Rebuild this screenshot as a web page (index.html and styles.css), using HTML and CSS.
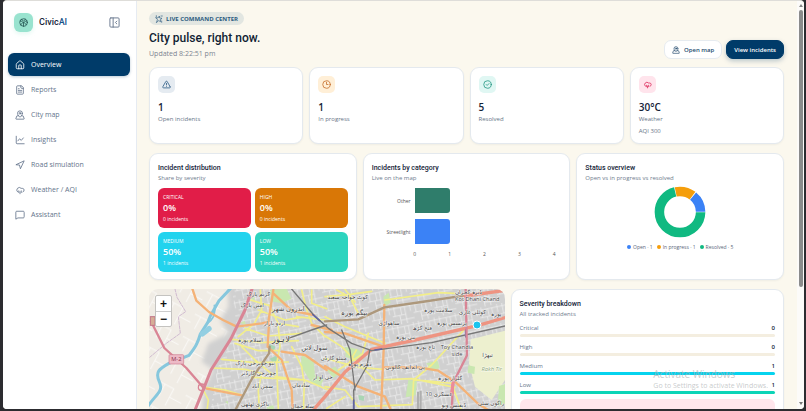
FILE: index.html
```html
<!DOCTYPE html>
<html lang="en">
<head>
<meta charset="utf-8">
<meta name="viewport" content="width=device-width, initial-scale=1">
<title>CivicAI</title>
<link rel="stylesheet" href="styles.css">
</head>
<body>
<svg class="defs" width="0" height="0" aria-hidden="true">
  <symbol id="pin" viewBox="0 0 24 24"><path d="M18 8c0 3.6-3.9 7.4-5.4 8.7a1 1 0 0 1-1.2 0C9.900 15.400 6 11.600 6 8a6 6 0 0 1 12 0"/><circle cx="12" cy="8" r="2"/><path d="M8.700 14H5a1 1 0 0 0-.9.700l-2 6a1 1 0 0 0 .9 1.300h18a1 1 0 0 0 .9-1.300l-2-6a1 1 0 0 0-.9-.700h-3.700"/></symbol>
  <symbol id="cloud" viewBox="0 0 24 24"><path d="M6 16.500A6 6 0 1 1 14.700 8h2.800a4.500 4.500 0 0 1 1.500 8.700M9 14v4M15 14v4M12 16v5"/></symbol>
</svg>
<div class="window">
  <aside class="sidebar">
    <div class="brand">
      <span class="logo"><svg class="icon" viewBox="0 0 24 24"><circle cx="12" cy="12" r="10"/><path d="M3 8c4 0 6 1 9 5 3-4 5-5 9-5M12 13v9M7 4l5 4 5-4M5 18l4-5M19 18l-4-5"/></svg></span>
      <span class="brand-name">Civic<b>AI</b></span>
      <button class="collapse" aria-label="Collapse sidebar"><svg class="icon" viewBox="0 0 24 24"><rect x="2" y="2" width="20" height="20" rx="2"/><path d="M9 2v20M17 9l-3 3 3 3"/></svg></button>
    </div>
    <nav class="nav">
      <a class="nav-item active" href="#"><svg class="icon" viewBox="0 0 24 24"><path d="M15 21v-8a1 1 0 0 0-1-1h-4a1 1 0 0 0-1 1v8"/><path d="M3 10a2 2 0 0 1 .7-1.500l7-6a2 2 0 0 1 2.600 0l7 6A2 2 0 0 1 21 10v9a2 2 0 0 1-2 2H5a2 2 0 0 1-2-2z"/></svg>Overview</a>
      <a class="nav-item" href="#"><svg class="icon" viewBox="0 0 24 24"><path d="M15 2H6a2 2 0 0 0-2 2v16a2 2 0 0 0 2 2h12a2 2 0 0 0 2-2V7zM14 2v4a2 2 0 0 0 2 2h4M10 9H8M16 13H8M16 17H8"/></svg>Reports</a>
      <a class="nav-item" href="#"><svg class="icon"><use href="#pin"/></svg>City map</a>
      <a class="nav-item" href="#"><svg class="icon" viewBox="0 0 24 24"><path d="M3 3v16a2 2 0 0 0 2 2h17M7 14l4-5 4 4 5-6"/></svg>Insights</a>
      <a class="nav-item" href="#"><svg class="icon" viewBox="0 0 24 24"><path d="M3 11 22 2l-9 19-2-8z"/></svg>Road simulation</a>
      <a class="nav-item" href="#"><svg class="icon"><use href="#cloud"/></svg>Weather / AQI</a>
      <a class="nav-item" href="#"><svg class="icon" viewBox="0 0 24 24"><path d="M22 17a2 2 0 0 1-2 2H7l-5 3V5a2 2 0 0 1 2-2h16a2 2 0 0 1 2 2z"/></svg>Assistant</a>
    </nav>
  </aside>

  <main class="main">
    <header class="header">
      <div>
        <span class="badge"><svg class="icon" viewBox="0 0 24 24"><path d="M3 8l6 1 4-6 1 6 7 1-5 4 1 6-6-3-7 6 3-8z"/><path d="M4 2v3M20 18v4M18 3h4"/></svg>LIVE COMMAND CENTER</span>
        <h1>City pulse, right now.</h1>
        <p class="updated">Updated 8:22:51 pm</p>
      </div>
      <div class="actions">
        <button class="btn"><svg class="icon"><use href="#pin"/></svg>Open map</button>
        <button class="btn primary">View incidents</button>
      </div>
    </header>

    <section class="stats">
      <article class="card stat"><span class="tile blue"><svg class="icon" viewBox="0 0 24 24"><path d="m21.700 18-8-14a2 2 0 0 0-3.500 0l-8 14A2 2 0 0 0 4 21h16a2 2 0 0 0 1.700-3M12 9v4M12 17h.01"/></svg></span><strong>1</strong><span>Open incidents</span></article>
      <article class="card stat"><span class="tile amber"><svg class="icon" viewBox="0 0 24 24"><circle cx="12" cy="12" r="10"/><path d="M12 6v6h4"/></svg></span><strong>1</strong><span>In progress</span></article>
      <article class="card stat"><span class="tile teal"><svg class="icon" viewBox="0 0 24 24"><circle cx="12" cy="12" r="10"/><path d="m8.500 12 2.500 2.500 5-5"/></svg></span><strong>5</strong><span>Resolved</span></article>
      <article class="card stat"><span class="tile rose"><svg class="icon"><use href="#cloud"/></svg></span><strong>30°C</strong><span>Weather</span><span class="aqi">AQI 300</span></article>
    </section>

    <section class="charts">
      <article class="card">
        <h2>Incident distribution</h2>
        <p class="sub">Share by severity</p>
        <div class="shares">
          <div class="share critical"><span>CRITICAL</span><strong>0%</strong><span>0 incidents</span></div>
          <div class="share high"><span>HIGH</span><strong>0%</strong><span>0 incidents</span></div>
          <div class="share medium"><span>MEDIUM</span><strong>50%</strong><span>1 incidents</span></div>
          <div class="share low"><span>LOW</span><strong>50%</strong><span>1 incidents</span></div>
        </div>
      </article>
      <article class="card">
        <h2>Incidents by category</h2>
        <p class="sub">Live on the map</p>
        <div class="bars">
          <span class="bar-label">Other</span><div class="bar other"></div>
          <span class="bar-label">Streetlight</span><div class="bar light"></div>
          <div class="axis"><span>0</span><span>1</span><span>2</span><span>3</span><span>4</span></div>
        </div>
      </article>
      <article class="card">
        <h2>Status overview</h2>
        <p class="sub">Open vs in progress vs resolved</p>
        <svg class="donut" viewBox="-26 -26 52 52" role="img" aria-label="Status split">
          <g transform="scale(1 -1)" fill="none" stroke-width="9.500">
            <circle r="20.600" pathLength="700" stroke="#3b82f6" stroke-dasharray="97 603" stroke-dashoffset="-1"/>
            <circle r="20.600" pathLength="700" stroke="#f59e0b" stroke-dasharray="97 603" stroke-dashoffset="-102"/>
            <circle r="20.600" pathLength="700" stroke="#10b981" stroke-dasharray="497 203" stroke-dashoffset="-202"/>
          </g>
        </svg>
        <ul class="legend"><li class="l-open">Open · 1</li><li class="l-progress">In progress · 1</li><li class="l-resolved">Resolved · 5</li></ul>
      </article>
    </section>

    <section class="lower">
      <div class="map">
        <svg class="map-art" viewBox="12 27 1068 420" preserveAspectRatio="xMinYMin slice" role="img" aria-label="Map of Lahore">
          <defs>
            <pattern id="streets" width="64" height="58" patternUnits="userSpaceOnUse" patternTransform="rotate(-12)">
              <path d="M0 8H64M0 31H40M22 46H64M8 0V31M40 8V58M56 0V24M22 31V58M28 8V31" fill="none" stroke="#f0f0f0" stroke-width="2"/>
            </pattern>
            <pattern id="fields" width="90" height="76" patternUnits="userSpaceOnUse" patternTransform="rotate(28)">
              <path d="M0 20H50V76M50 48H90M20 20V60" fill="none" stroke="#fff" stroke-width="2"/>
            </pattern>
            <filter id="soft" x="-20%" y="-5%" width="140%" height="110%"><feGaussianBlur stdDeviation="7"/></filter>
          </defs>
          <rect x="0" y="0" width="1100" height="500" fill="#f0ece5"/>
          <rect x="0" y="0" width="300" height="500" fill="url(#fields)"/>
          <path filter="url(#soft)" fill="#d0d0d0" d="M245 -20H1140V520H165L175 330 205 270 170 245 190 190 250 160 225 120 250 80z"/>
          <path fill="url(#streets)" d="M260 20H1100V460H185L215 270 275 140z"/>
          <path fill="#edf0cf" d="M978 178 1080 152V300L1040 360 990 320 972 250z"/>
          <g fill="#c9e7b0">
            <path d="M375 30l50-4 14 30-30 14-30-6zM470 225l36 20 4 40 26 12-10 24-28-14-30-50zM600 200l40 8 16 20-24 16-30-14zM715 50l16-12 6 30-20 12zM545 270l26-10 14 20-20 14zM790 300l26 4-4 42-30 6zM970 256l20 4-2 22-20-4zM844 250l34-8 6 22-24 10zM1062 318l18-6v60l-22 6z"/>
            <path d="M285 128l14-6 4 14zM318 56l10-6 2 12zM240 365l8-2 2 10zM365 380l20-4 4 16-20 8z"/>
          </g>
          <path fill="#a9d6b4" d="M368 190l24 10-6 12-16-6zM374 236l18-8 12 14-18 8zM640 345l18 4-2 14-14-4z"/>
          <path fill="#afafaf" d="M816 336h6v60h-6zM824 332h6v60h-6z"/>

          <g fill="none" stroke-linejoin="round" stroke-linecap="round">
            <path stroke="#86c7dd" stroke-width="9" d="M8 380C30 345 56 335 44 308 28 275 44 266 72 250L132 226C152 200 158 190 166 162L188 128 196 108 222 62 256 26"/>
            <path stroke="#86c7dd" stroke-width="5" d="M186 130C206 118 214 96 208 76"/>
            <path stroke="#93cfe2" stroke-width="16" d="M172 162L192 146"/>
            <path stroke="#c0a2c6" stroke-width="2" stroke-dasharray="9 4" d="M90 27 96 52 122 95 100 110 106 160 64 190 14 232"/>
            <g stroke="#f2ee8a" stroke-width="5">
              <path d="M230 238 330 248 430 246M205 264 300 268 350 280M270 190 340 212 400 212M280 170 328 130 350 90 346 30M300 145 370 168 470 160M262 178 350 188 460 182M340 90 420 120 470 112M316 60 372 76 400 130 460 140M470 30 482 80 500 130 540 170M500 30 500 70 545 86M455 110 540 120M290 200 330 240 390 290 480 300 550 330M350 280 340 330 345 440M180 322 240 330 290 345M175 330 190 360 180 440M320 292 480 300M478 300 474 440M400 140 405 200 395 250 402 440M440 200 470 260 476 300"/>
              <path d="M540 50 610 44 680 34M575 30 615 52 640 100M600 28 630 66M540 168 590 200 635 246 690 300M540 320 600 330 640 380 802 374 806 300 835 302 924 310M690 300 800 296 930 322M670 160 652 222 580 270M806 300 860 255 964 142M720 60 880 38 930 40M540 110 600 140 720 190M540 235 640 262 716 268M612 250 634 210M600 350 545 385M925 325 968 440"/>
            </g>
            <g stroke="#f4b277" stroke-width="7">
              <path d="M140 20 154 62 192 96 234 120 275 140 350 130 370 126M370 126 385 30M385 40 440 92 506 105M372 130 368 200 410 240 440 330 446 440M500 135 560 150M410 215 480 225 545 270M185 326 290 346M540 258 640 320 720 350 760 440M718 75 716 210 706 440M716 200 600 160 540 156M720 262 820 262 880 272 930 305 1000 372 1080 420"/>
            </g>
            <path stroke="#ad987c" stroke-width="7" d="M250 440 270 392 322 294 372 220 374 200M540 124 640 118 718 82 830 66 960 46"/>
            <path stroke="#ee9482" stroke-width="10" d="M460 440 500 395 540 350 600 276 680 208 810 180 1000 136 1090 110M960 48 1075 32"/>
            <path stroke="#777" stroke-width="4" d="M434 20 506 105 550 145 620 190 680 212 860 188 1080 138M430 175 500 150 545 135M674 212 666 258 626 330 628 440M590 150 615 210 630 330"/>
            <path stroke="#6265a2" stroke-width="5" d="M504 104 524 122M690 210 710 207M626 360V395M962 170V150"/>
            <path stroke="#d98595" stroke-width="9" d="M322 24 300 90 258 176 198 270 176 326 130 440"/>
            <path stroke="#d98595" stroke-width="7" d="M18 124 58 204 124 264 176 324M962 26 966 226 924 310 918 440"/>
            <circle cx="170" cy="322" r="10" stroke="#d98595" stroke-width="4"/>
            <path stroke="#ed8b97" stroke-width="10" d="M924 310 920 342"/>
          </g>
          <rect x="16" y="110" width="14" height="26" fill="#d6ad96" stroke="#c27588" stroke-width="3"/>
          <rect x="72" y="224" width="44" height="28" rx="3" fill="#edbac6" stroke="#ce7d91" stroke-width="2"/>
          <g class="places">
            <text x="94" y="244" class="road">M-2</text>
            <text x="340" y="49">کریم پارک</text><text x="322" y="81">امین پارک</text>
            <text x="430" y="92" class="big">اندرون شهر</text><text x="388" y="136">اردو بازار</text>
            <text x="316" y="185">اسلام پورہ</text><text x="408" y="186" class="city">لاہور</text>
            <text x="508" y="211" class="big">سول لائن</text>
            <text x="330" y="256">نیو چوبرجی پارک</text><text x="340" y="286">چوبرجی گارڈنز</text>
            <text x="352" y="325">سمن آباد</text><text x="468" y="321">شادمان</text>
            <text x="534" y="298">جی او آر</text><text x="330" y="378">باگڑی ٹھٹھی</text><text x="472" y="384">شاہ جمال</text>
            <text x="608" y="56">کوٹ خواجہ سعید</text><text x="628" y="106" class="big">بیگم پورہ</text>
            <text x="970" y="41">ڈیرہ گجراں</text><text x="997" y="62">Kot Dhani Chand</text>
            <text x="880" y="96">سلامت پورہ</text><text x="982" y="103">کوٹلی غازی</text>
            <text x="732" y="134">ساھواڑی</text><text x="920" y="134">پرنسس پورہ</text><text x="832" y="149">فتح گڑھ</text>
            <text x="1054" y="107">پورہ</text><text x="782" y="177">نبی پورہ</text><text x="842" y="208">تاج پورہ</text>
            <text x="936" y="206">Toy Chandia</text><text x="936" y="227">side</text>
            <text x="1028" y="230">تیهڑا</text><text x="566" y="239">مینٹو گارڈن</text><text x="644" y="258">دھرم پورہ</text>
            <text x="780" y="266">پی اے ایف کالونی</text><text x="916" y="300">گلزار پورہ</text>
            <text x="1040" y="273" class="park">Rakh Tir</text>
            <text x="882" y="347">عسکری 10</text><text x="1038" y="375">راگوں سٹی</text><text x="926" y="382">ڈیفنس ویو</text>
          </g>
          <circle cx="996" cy="135" r="12" fill="#19c4ee" stroke="#fff" stroke-width="3"/>
        </svg>
        <div class="zoom"><button aria-label="Zoom in">+</button><button aria-label="Zoom out">−</button></div>
      </div>
      <article class="card severity">
        <h2>Severity breakdown</h2>
        <p class="sub">All tracked incidents</p>
        <dl>
          <div class="level"><dt>Critical</dt><dd>0</dd></div>
          <div class="level"><dt>High</dt><dd>0</dd></div>
          <div class="level is-medium"><dt>Medium</dt><dd>1</dd></div>
          <div class="level is-low"><dt>Low</dt><dd>1</dd></div>
        </dl>
        <div class="alert"></div>
      </article>
    </section>
  </main>
  <div class="scrollbar" aria-hidden="true"><i class="up"></i><i class="thumb"></i><i class="down"></i></div>
</div>
<div class="watermark"><strong>Activate Windows</strong><span>Go to Settings to activate Windows.</span></div>
</body>
</html>
```
FILE: styles.css
```css
* { box-sizing: border-box; margin: 0; padding: 0; }
body {
  height: 100vh;
  overflow: hidden;
  background: #2c2c30;
  color: #142238;
  font: 6px/10px "Open Sans", "Noto Sans", sans-serif;
}
button { border: 0; background: none; font: inherit; color: inherit; }
a { color: inherit; text-decoration: none; }
ul { list-style: none; }
.defs { position: absolute; }
.icon { width: 11px; height: 11px; flex: none; fill: none; stroke: currentColor; stroke-width: 2; stroke-linecap: round; stroke-linejoin: round; }

.window {
  display: flex;
  height: calc(100vh - 2px);
  margin: 0 2px 0 3px;
  overflow: hidden;
  border-top: 1px solid #deddd9;
  border-radius: 4px;
  background: #fbf8ee;
}
.sidebar { flex: none; width: 134px; padding: 11px 6px 0 5px; background: #fff; border-right: 1px solid #e6ebf2; }
.brand { display: flex; align-items: center; gap: 6px; height: 20px; padding: 0 10px 0 6px; }
.logo { display: grid; place-items: center; width: 19px; height: 19px; border-radius: 6px; background: #99e3cf; color: #1c4b4a; box-shadow: 0 2px 4px #99e3cf44; }
.logo .icon { width: 9px; height: 9px; }
.brand-name { flex: 1; font: 500 9px/12px Roboto, "Open Sans", sans-serif; }
.brand-name b { font-weight: 500; color: #14538a; }
.collapse { display: flex; color: #64748b; }
.nav { display: grid; gap: 2px; margin-top: 21px; }
.nav-item { display: flex; align-items: center; gap: 6px; height: 23px; padding: 0 7px; border-radius: 6px; color: #64748b; font-size: 7px; }
.nav-item .icon { width: 10px; height: 10px; }
.nav-item.active { background: #003b69; color: #fff; box-shadow: 0 1px 3px #003b6944; }

.main { flex: 1; min-width: 0; padding: 11px 13px 0 12px; }
.header { display: flex; justify-content: space-between; align-items: flex-end; height: 47px; }
.badge { display: flex; width: fit-content; align-items: center; gap: 3px; height: 13px; padding: 0 6px; border-radius: 7px; background: #e2e6e1; color: #2d5c80; font-size: 6px; font-weight: 700; }
.badge .icon { width: 8px; height: 8px; }
h1 { margin: 4px 0 2px; font: 500 12px/18px Roboto, "Open Sans", sans-serif; color: #101e33; }
.updated { font-size: 7px; line-height: 10px; color: #7b8491; }
.actions { display: flex; gap: 4px; }
.btn { display: flex; align-items: center; gap: 4px; height: 19px; padding: 0 7px; border: 1px solid #e6ebf0; border-radius: 7px; background: #fff; color: #21496d; font-size: 6px; font-weight: 600; }
.btn .icon { width: 8px; height: 8px; }
.btn.primary { border-color: #003b69; background: #003b69; color: #fff; box-shadow: 0 2px 5px #003b6944; }

.card { min-width: 0; padding: 8px; border: 1px solid #e4e9ee; border-radius: 9px; background: #fff; box-shadow: 0 1px 2px #1422380d; }
.stats { display: grid; grid-template-columns: repeat(4, 1fr); gap: 6px; margin-top: 8px; }
.stat { display: flex; flex-direction: column; align-items: flex-start; height: 77px; padding-bottom: 4px; color: #687588; }
.stat strong { margin-top: 7px; font-size: 10px; line-height: 14px; font-weight: 600; color: #142238; }
.stat .aqi { margin-top: 2px; }
.tile { flex: none; display: grid; place-items: center; width: 17px; height: 17px; border-radius: 5px; }
.tile .icon { width: 9px; height: 9px; }
.blue { background: #e5ebf1; color: #1d527e; }
.amber { background: #ffefd7; color: #c2641f; }
.teal { background: #e0f7f3; color: #16907b; }
.rose { background: #ffe4ec; color: #da1f52; }

.charts { display: grid; grid-template-columns: repeat(3, 1fr); gap: 6px; margin-top: 9px; }
.charts .card { height: 127px; }
h2 { font: 500 7px/12px Roboto, "Open Sans", sans-serif; }
.sub { color: #6f7c8e; line-height: 9px; }
.shares { display: grid; grid-template-columns: 1fr 1fr; gap: 4px; margin-top: 5px; }
.share { display: flex; flex-direction: column; height: 40px; padding: 4px 5px; border-radius: 6px; color: #fff; font-size: 5px; }
.share strong { font-size: 9px; line-height: 12px; font-weight: 600; }
.critical { background: #e11d48; }
.high { background: #d97706; }
.medium { background: #22d3ee; }
.low { background: #2dd4bf; }
.bars { display: grid; grid-template-columns: 39px 1fr; gap: 6px 4px; margin: 5px 7px 0 0; align-items: center; color: #555; font-size: 5px; }
.bar-label { text-align: right; }
.bar { width: 25%; height: 25px; border-radius: 0 3px 3px 0; }
.other { background: #2f7d6b; }
.light { background: #3b82f6; }
.axis { grid-column: 2; display: flex; justify-content: space-between; line-height: 8px; }
.axis span { display: flex; justify-content: center; width: 0; }
.donut { display: block; width: 52px; height: 52px; margin: 3px auto 0; }
.legend { display: flex; justify-content: center; gap: 4px; margin-top: 4px; color: #596579; font-size: 5px; }
.legend li { display: flex; align-items: center; gap: 2px; }
.legend li::before { content: ""; width: 4px; height: 4px; border-radius: 50%; background: #3b82f6; }
.legend .l-progress::before { background: #f59e0b; }
.legend .l-resolved::before { background: #10b981; }

.lower { display: grid; grid-template-columns: 1.3fr 1fr; gap: 6px; margin-top: 9px; }
.map { position: relative; overflow: hidden; height: 140px; border-radius: 9px; }
.map-art { display: block; width: 100%; height: 100%; }
.places text { font: 17px "Open Sans", "DejaVu Sans", sans-serif; fill: #444; text-anchor: middle; paint-order: stroke; stroke: #ffffffaa; stroke-width: 3px; }
.places .big { font-size: 20px; }
.places .city { font-size: 25px; }
.places .road { fill: #8b2f4b; stroke: none; }
.places .park { fill: #8da77a; font-style: italic; }
.zoom { position: absolute; top: 6px; left: 6px; display: grid; width: 17px; border: 1px solid #c4c3c0; border-radius: 2px; background: #fff; color: #111; }
.zoom button { height: 15px; font: 700 12px/14px "Liberation Sans", sans-serif; }
.zoom button + button { border-top: 1px solid #ccc; }
.severity { height: 140px; }
.severity dl { margin-top: 4px; }
.level { display: grid; grid-template: 11px 3px / 1fr auto; height: 19px; line-height: 10px; color: #64748b; }
.level dd { font-weight: 600; color: #142238; }
.level::after { content: ""; grid-column: 1 / -1; height: 3px; border-radius: 2px; background: #f4eee0; }
.is-medium::after { background: #06d3ee; }
.is-low::after { background: #0cd4b7; }
.alert { height: 30px; border-radius: 6px; background: #ffe6ec; }

.scrollbar { flex: none; display: flex; flex-direction: column; align-items: center; width: 7px; padding: 3px 0 4px; background: #fcfbf9; }
.scrollbar .up { border: 2px solid transparent; border-top: 0; border-bottom: 3px solid #858585; }
.scrollbar .thumb { width: 4px; height: 69%; margin-top: 3px; border-radius: 2px; background: #8b8b8b; }
.scrollbar .down { margin-top: auto; border: 2px solid transparent; border-bottom: 0; border-top: 3px solid #777; }
.watermark { position: absolute; right: 38px; bottom: 19px; display: grid; color: #adb1b4b0; font-size: 7px; line-height: 12px; }
.watermark strong { font-size: 10px; font-weight: 400; }
```
